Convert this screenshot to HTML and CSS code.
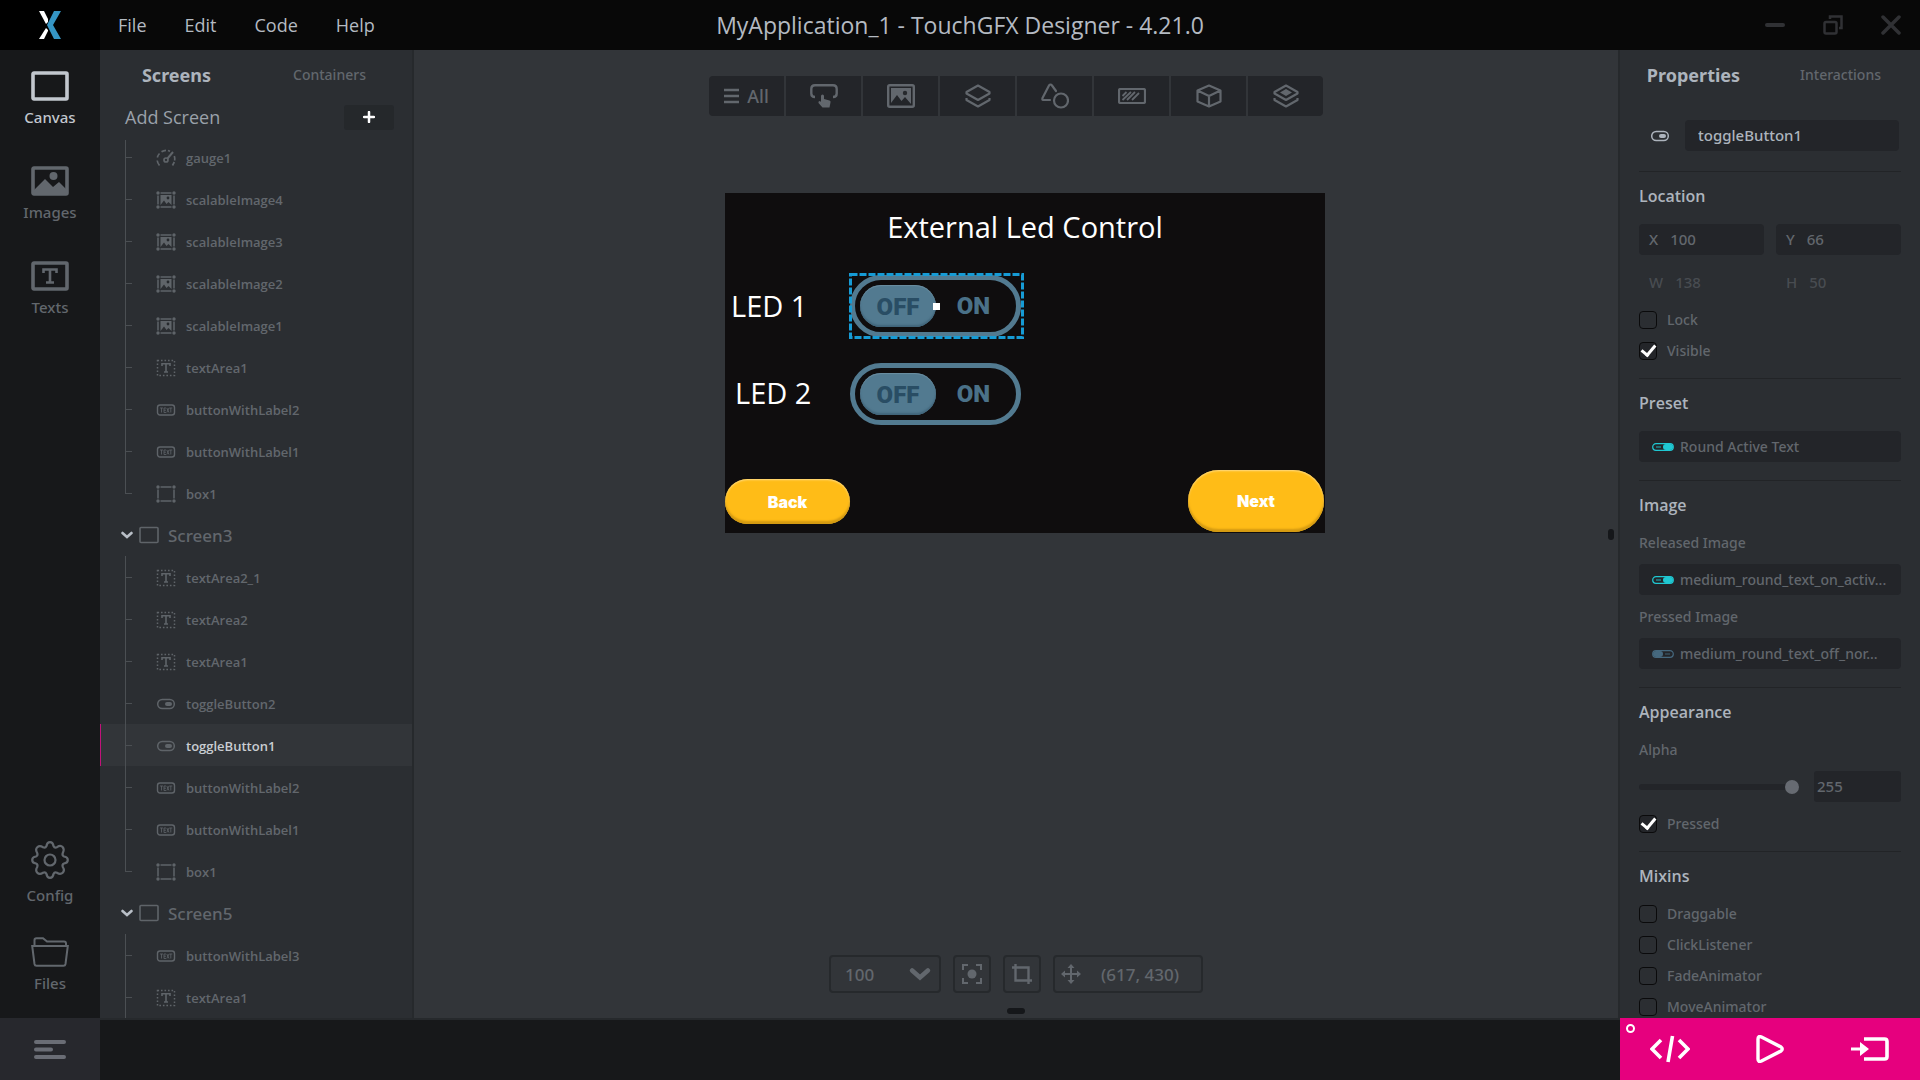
FILE: index.html
```html
<!DOCTYPE html>
<html lang="en">
<head>
    <meta charset="UTF-8">
    <meta name="viewport" content="width=device-width, initial-scale=1.0">
    <title>MyApplication_1 - TouchGFX Designer - 4.21.0</title>
    <link rel="stylesheet" href="styles.css">
</head>
<body>
    <!-- Icon sprite -->
    <svg class="sprite" aria-hidden="true">
        <symbol id="i-gauge" viewBox="0 0 20 18">
            <path d="M3.500 16.500Q1.500 14 1.200 11.500M1.300 8.500Q2 6 3.500 4.500M5.500 2.800Q7.500 1.400 10 1.300M12 1.500L14 2.300M18.300 7Q19 9 18.700 11.500M18.300 13L16.500 16.500" fill="none" stroke="currentColor" stroke-width="1.700"/>
            <path d="M17 3L11.500 9.500" stroke="currentColor" stroke-width="2"/>
            <circle cx="10" cy="11" r="2" fill="none" stroke="currentColor" stroke-width="1.700"/>
        </symbol>
        <symbol id="i-box" viewBox="0 0 20 18">
            <path d="M4.500 2H15.500M4.500 16H15.500M2 4.500V13.500M18 4.500V13.500" stroke="currentColor" stroke-width="1.500"/>
            <circle cx="2" cy="2" r="1.700"/><circle cx="18" cy="2" r="1.700"/><circle cx="2" cy="16" r="1.700"/><circle cx="18" cy="16" r="1.700"/>
        </symbol>
        <symbol id="i-scalable" viewBox="0 0 20 18">
            <use href="#i-box"/>
            <path d="M4.500 4H15.500V14L12.500 11L10.500 13L8 9.500L4.500 14Z"/>
            <circle cx="12" cy="7" r="1.400" class="cut"/>
        </symbol>
        <symbol id="i-textarea" viewBox="0 0 20 18">
            <rect x="1.500" y="1.500" width="17" height="15" fill="none" stroke="currentColor" stroke-width="1.500" stroke-dasharray="1.600 1.900"/>
            <path d="M6 7V4.800H14V7M10 5V13M8 13H12" fill="none" stroke="currentColor" stroke-width="1.600"/>
        </symbol>
        <symbol id="i-label" viewBox="0 0 20 18">
            <rect x="1.500" y="4" width="17" height="10" rx="2.500" fill="none" stroke="currentColor" stroke-width="1.400"/>
            <path d="M4 7H7M5.500 7V11.500M10 7H8V11.500H10M8 9.200H10M10.800 7L13 11.500M13 7L10.800 11.500M13.300 7H16.300M14.800 7V11.500" fill="none" stroke="currentColor" stroke-width=".8"/>
        </symbol>
        <symbol id="i-toggle" viewBox="0 0 20 18">
            <rect x="1.700" y="4.500" width="16.600" height="9" rx="4.500" fill="none" stroke="currentColor" stroke-width="1.500"/>
            <rect x="9" y="7" width="7" height="4" rx="2"/>
        </symbol>
        <symbol id="i-screen" viewBox="0 0 20 18">
            <rect x="1" y="1.500" width="18" height="15" rx="1" fill="none" stroke="currentColor" stroke-width="1.600"/>
        </symbol>
        <symbol id="i-chevron" viewBox="0 0 12 8">
            <path d="M1.500 2L6 6L10.500 2" fill="none" stroke="currentColor" stroke-width="2.600" stroke-linecap="round"/>
        </symbol>
        <symbol id="i-mini" viewBox="0 0 22 8">
            <rect x=".7" y=".7" width="20.600" height="6.600" rx="3.300" fill="none" stroke="currentColor" stroke-width="1.200"/>
            <path d="M4 4H9" stroke="currentColor" stroke-width="1.500" opacity=".6"/>
            <rect x="11" y="1" width="10" height="6" rx="3"/>
        </symbol>
    </svg>

    <div class="app">
        <header class="titlebar">
            <div class="logo">
                <svg width="22" height="28" viewBox="0 0 22 28">
                    <path d="M0 0H5L9 8V11L7 13Z" fill="#fff"/>
                    <path d="M0 28H5L9 20V19L7 17Z" fill="#fff"/>
                    <path d="M15 0H22L14 14L22 28H15L8 14Z" fill="#3595c4"/>
                </svg>
            </div>
            <nav class="menu">
                <button>File</button>
                <button>Edit</button>
                <button>Code</button>
                <button>Help</button>
            </nav>
            <h1 class="window-title">MyApplication_1 - TouchGFX Designer - 4.21.0</h1>
            <div class="window-buttons">
                <button aria-label="Minimize"><svg width="20" height="20" viewBox="0 0 20 20"><path d="M2 10H18" stroke="currentColor" stroke-width="4" stroke-linecap="round"/></svg></button>
                <button aria-label="Restore"><svg width="20" height="20" viewBox="0 0 20 20"><g fill="none" stroke="currentColor" stroke-width="2.500"><rect x="1.500" y="7" width="12" height="11.500" rx="1.500"/><path d="M7 4V1.500H18.500V13H16"/></g></svg></button>
                <button aria-label="Close"><svg width="20" height="20" viewBox="0 0 20 20"><path d="M2 2L18 18M18 2L2 18" stroke="currentColor" stroke-width="3.500" stroke-linecap="round"/></svg></button>
            </div>
        </header>

        <div class="workspace">
            <!-- Main navigation -->
            <nav class="rail">
                <button class="rail-item active">
                    <svg width="38" height="30" viewBox="0 0 38 30"><rect x="2" y="2" width="34" height="26" rx="1" fill="none" stroke="currentColor" stroke-width="3.600"/></svg>
                    Canvas
                </button>
                <button class="rail-item">
                    <svg width="38" height="30" viewBox="0 0 38 30"><rect x="2" y="2" width="34" height="26" rx="1" fill="none" stroke="currentColor" stroke-width="3.600"/><path d="M3 24L14 13L22 21L28 16L36 24V28H3Z"/><circle cx="22.500" cy="10" r="4"/></svg>
                    Images
                </button>
                <button class="rail-item">
                    <svg width="38" height="30" viewBox="0 0 38 30"><rect x="2" y="2" width="34" height="26" rx="1" fill="none" stroke="currentColor" stroke-width="3.600"/><path d="M12.500 12V8.500H25.500V12M19 8.500V21.500M15 21.500H23" fill="none" stroke="currentColor" stroke-width="2.600"/></svg>
                    Texts
                </button>
                <span class="rail-space"></span>
                <button class="rail-item config">
                    <svg width="38" height="38" viewBox="0 0 38 38"><g fill="none" stroke="currentColor" stroke-width="2.200" stroke-linejoin="round"><path d="M15.500 5Q16 1.200 19 1.200T22.500 5Q23.500 7.200 26 6.200Q29.500 3.800 31.600 6.100T31.800 12Q30.800 14.500 33 15.500Q36.800 16 36.800 19T33 22.500Q30.800 23.500 31.800 26Q34 29.500 31.700 31.700T26 31.800Q23.500 30.800 22.500 33Q22 36.800 19 36.800T15.500 33Q14.500 30.800 12 31.800Q8.500 34 6.300 31.700T6.200 26Q7.200 23.500 5 22.500Q1.200 22 1.200 19T5 15.500Q7.200 14.500 6.200 12Q4 8.500 6.300 6.300T12 6.200Q14.500 7.200 15.500 5Z"/><circle cx="19" cy="19" r="5.500"/></g></svg>
                    Config
                </button>
                <button class="rail-item files">
                    <svg width="38" height="30" viewBox="0 0 38 30"><path d="M3.500 9V3Q3.500 1.200 5.500 1.200H12L16 4.500H33Q35 4.500 35 6.500V9M1.200 9H36.800L34.500 27Q34.200 28.800 32.500 28.800H5.500Q3.800 28.800 3.500 27Z" fill="none" stroke="currentColor" stroke-width="2"/></svg>
                    Files
                </button>
            </nav>

            <!-- Screens tree -->
            <aside class="screens">
                <div class="tabs">
                    <button class="tab active">Screens</button>
                    <button class="tab">Containers</button>
                </div>
                <div class="add-screen">
                    <span>Add Screen</span>
                    <button class="add-btn" aria-label="Add Screen"><svg width="12" height="12" viewBox="0 0 12 12"><path d="M6 1V11M1 6H11" stroke="currentColor" stroke-width="2.500" stroke-linecap="round"/></svg></button>
                </div>
                <div class="tree">
                    <ul class="tree-items first">
                        <li><svg><use href="#i-gauge"/></svg>gauge1</li>
                        <li><svg><use href="#i-scalable"/></svg>scalableImage4</li>
                        <li><svg><use href="#i-scalable"/></svg>scalableImage3</li>
                        <li><svg><use href="#i-scalable"/></svg>scalableImage2</li>
                        <li><svg><use href="#i-scalable"/></svg>scalableImage1</li>
                        <li><svg><use href="#i-textarea"/></svg>textArea1</li>
                        <li><svg><use href="#i-label"/></svg>buttonWithLabel2</li>
                        <li><svg><use href="#i-label"/></svg>buttonWithLabel1</li>
                        <li class="last"><svg><use href="#i-box"/></svg>box1</li>
                    </ul>
                    <div class="tree-screen"><svg class="chevron"><use href="#i-chevron"/></svg><svg><use href="#i-screen"/></svg>Screen3</div>
                    <ul class="tree-items">
                        <li><svg><use href="#i-textarea"/></svg>textArea2_1</li>
                        <li><svg><use href="#i-textarea"/></svg>textArea2</li>
                        <li><svg><use href="#i-textarea"/></svg>textArea1</li>
                        <li><svg><use href="#i-toggle"/></svg>toggleButton2</li>
                        <li class="selected"><svg><use href="#i-toggle"/></svg>toggleButton1</li>
                        <li><svg><use href="#i-label"/></svg>buttonWithLabel2</li>
                        <li><svg><use href="#i-label"/></svg>buttonWithLabel1</li>
                        <li class="last"><svg><use href="#i-box"/></svg>box1</li>
                    </ul>
                    <div class="tree-screen"><svg class="chevron"><use href="#i-chevron"/></svg><svg><use href="#i-screen"/></svg>Screen5</div>
                    <ul class="tree-items">
                        <li><svg><use href="#i-label"/></svg>buttonWithLabel3</li>
                        <li><svg><use href="#i-textarea"/></svg>textArea1</li>
                    </ul>
                </div>
            </aside>

            <!-- Canvas -->
            <main class="canvas">
                <div class="widget-bar">
                    <button><svg width="15" height="16" viewBox="0 0 15 16"><path d="M0 2H15M0 8H15M0 14H15" stroke="currentColor" stroke-width="2.400"/></svg>All</button>
                    <button aria-label="Buttons"><svg width="28" height="24" viewBox="0 0 28 24"><path d="M5 13Q1.300 13 1.300 9.500V5Q1.300 1.300 5 1.300H23Q26.700 1.300 26.700 5V9.500Q26.700 13 23 13" fill="none" stroke="currentColor" stroke-width="2.400"/><path d="M11 12Q11 10.500 12.500 10.500T14 12V15L19.500 16.500Q21 17 20.500 18.500L19.500 23.500H12.500L8.500 19Q8 17.300 9.500 17L11 17.800Z"/></svg></button>
                    <button aria-label="Images"><svg width="28" height="24" viewBox="0 0 28 24"><rect x="1.200" y="1.200" width="25.600" height="21.600" rx="1.500" fill="none" stroke="currentColor" stroke-width="2.400"/><path d="M4 4H24V20L18 13L14.500 17L10 11L4 19Z"/><circle cx="18" cy="9" r="2.200" class="cut"/></svg></button>
                    <button aria-label="Containers"><svg width="26" height="24" viewBox="0 0 26 24"><g fill="none" stroke="currentColor" stroke-width="2.200" stroke-linejoin="round"><path d="M13 1.500L24.500 8V9.500L13 16L1.500 9.500V8Z"/><path d="M1.500 14V16L13 22.500L24.500 16V14"/></g></svg></button>
                    <button aria-label="Shapes"><svg width="28" height="26" viewBox="0 0 28 26"><g fill="none" stroke="currentColor" stroke-width="2.200" stroke-linejoin="round" stroke-linecap="round"><path d="M9 17H2Q1 17 1.500 15L8 2.500Q9.500 .5 11 2.500L15 8"/><circle cx="20" cy="17.500" r="7"/></g></svg></button>
                    <button aria-label="Progress"><svg width="28" height="16" viewBox="0 0 28 16"><rect x="1" y="1" width="26" height="14" rx="1.500" fill="none" stroke="currentColor" stroke-width="2.200"/><path d="M4.500 8L8.500 4M4.500 12L13 4M9 12L17 4M14 12L21 5" stroke="currentColor" stroke-width="1.800"/></svg></button>
                    <button aria-label="Miscellaneous"><svg width="26" height="24" viewBox="0 0 26 24"><path d="M13 1.500L24.500 6.500V17.500L13 22.500L1.500 17.500V6.500ZM1.500 6.500L13 12L24.500 6.500M13 12V22" fill="none" stroke="currentColor" stroke-width="2.200" stroke-linejoin="round"/></svg></button>
                    <button aria-label="Custom containers"><svg width="26" height="24" viewBox="0 0 26 24"><g fill="none" stroke="currentColor" stroke-width="2.200" stroke-linejoin="round"><path d="M13 1.500L24.500 8V9.500L13 16L1.500 9.500V8Z"/><path d="M1.500 14V16L13 22.500L24.500 16V14"/></g><path d="M13 5L19 8.500L13 12L7 8.500Z"/></svg></button>
                </div>

                <div class="stage">
                    <div class="device">
                        <p class="device-title">External Led Control</p>
                        <p class="led led-1">LED 1</p>
                        <p class="led led-2">LED 2</p>
                        <button class="toggle toggle-1"><span class="knob">OFF</span><span class="state">ON</span></button>
                        <button class="toggle toggle-2"><span class="knob">OFF</span><span class="state">ON</span></button>
                        <svg class="selection" width="176" height="66" viewBox="0 0 176 66">
                            <rect x="1.500" y="1.500" width="172" height="63" fill="none" stroke="#169bd5" stroke-width="3" stroke-dasharray="7 2"/>
                            <rect x="84" y="30" width="7" height="7" fill="#fff"/>
                        </svg>
                        <button class="flow-btn back">Back</button>
                        <button class="flow-btn next">Next</button>
                    </div>
                </div>

                <div class="view-bar">
                    <div class="zoom-field">
                        <select aria-label="Zoom"><option>100</option></select>
                        <svg width="22" height="14"><use href="#i-chevron"/></svg>
                    </div>
                    <button aria-label="Center"><svg width="20" height="20" viewBox="0 0 20 20"><path d="M1 6V1H6M14 1H19V6M19 14V19H14M6 19H1V14" fill="none" stroke="currentColor" stroke-width="2"/><circle cx="10" cy="10" r="4.500"/></svg></button>
                    <button aria-label="Crop"><svg width="20" height="20" viewBox="0 0 20 20"><path d="M0 3.500H16.500V20M3.500 0V16.500H20" fill="none" stroke="currentColor" stroke-width="2.400"/></svg></button>
                    <div class="coords"><svg width="20" height="20" viewBox="0 0 20 20"><path d="M10 3V17M3 10H17" stroke="currentColor" stroke-width="2"/><path d="M10 0L13.500 4H6.500ZM10 20L6.500 16H13.500ZM0 10L4 6.500V13.500ZM20 10L16 13.500V6.500Z"/></svg>(617, 430)</div>
                </div>
                <span class="grip grip-bottom"></span>
                <span class="grip grip-right"></span>
            </main>

            <!-- Properties -->
            <aside class="properties">
                <div class="tabs">
                    <button class="tab active">Properties</button>
                    <button class="tab">Interactions</button>
                </div>
                <div class="props-body">
                    <div class="name-row">
                        <svg width="20" height="18"><use href="#i-toggle"/></svg>
                        <input type="text" class="name-input" aria-label="Name" value="toggleButton1">
                    </div>

                    <section>
                        <h2>Location</h2>
                        <div class="field-grid">
                            <label class="field">X <input type="text" value="100"></label>
                            <label class="field">Y <input type="text" value="66"></label>
                            <label class="field disabled">W <input type="text" value="138" disabled></label>
                            <label class="field disabled">H <input type="text" value="50" disabled></label>
                        </div>
                        <div class="checks">
                            <label class="check"><input type="checkbox">Lock</label>
                            <label class="check"><input type="checkbox" checked>Visible</label>
                        </div>
                    </section>

                    <section>
                        <h2>Preset</h2>
                        <button class="picker"><svg class="on"><use href="#i-mini"/></svg>Round Active Text</button>
                    </section>

                    <section>
                        <h2>Image</h2>
                        <p class="caption">Released Image</p>
                        <button class="picker"><svg class="on"><use href="#i-mini"/></svg>medium_round_text_on_activ...</button>
                        <p class="caption">Pressed Image</p>
                        <button class="picker"><svg class="off"><use href="#i-mini"/></svg>medium_round_text_off_nor...</button>
                    </section>

                    <section>
                        <h2>Appearance</h2>
                        <label class="caption" for="alpha">Alpha</label>
                        <div class="slider-row">
                            <input type="range" id="alpha" min="0" max="255" value="255">
                            <input type="text" class="alpha-input" aria-label="Alpha value" value="255">
                        </div>
                        <div class="checks">
                            <label class="check"><input type="checkbox" checked>Pressed</label>
                        </div>
                    </section>

                    <section>
                        <h2>Mixins</h2>
                        <div class="checks">
                            <label class="check"><input type="checkbox">Draggable</label>
                            <label class="check"><input type="checkbox">ClickListener</label>
                            <label class="check"><input type="checkbox">FadeAnimator</label>
                            <label class="check"><input type="checkbox">MoveAnimator</label>
                        </div>
                    </section>
                </div>
            </aside>
        </div>

        <footer class="bottombar">
            <button class="log-btn" aria-label="Log"><svg width="32" height="20" viewBox="0 0 32 20"><path d="M2 2H30M2 9.500H17M2 17H30" stroke="currentColor" stroke-width="4" stroke-linecap="round"/></svg></button>
            <div class="status"></div>
            <div class="actions">
                <span class="badge"></span>
                <button aria-label="Generate code"><svg width="40" height="28" viewBox="0 0 40 28"><path d="M11 5L2 14L11 23M29 5L38 14L29 23M22.500 1L18 27" fill="none" stroke="currentColor" stroke-width="3.600"/></svg></button>
                <button aria-label="Run simulator"><svg width="28" height="28" viewBox="0 0 28 28"><path d="M2 4Q2 .5 5.500 2L25 12Q27.500 14 25 16L5.500 26Q2 27.500 2 24Z" fill="none" stroke="currentColor" stroke-width="3.400"/></svg></button>
                <button aria-label="Run target"><svg width="38" height="24" viewBox="0 0 38 24"><path d="M13 2H33.500Q36 2 36 4.500V19.500Q36 22 33.500 22H13" fill="none" stroke="currentColor" stroke-width="3.600"/><path d="M0 10.500H9V5L18 12L9 19V13.500H0Z"/></svg></button>
            </div>
        </footer>
    </div>
</body>
</html>
```
FILE: styles.css
```css
* {
    margin: 0;
    padding: 0;
    box-sizing: border-box;
}

body {
    font-family: "Noto Sans", "Open Sans", sans-serif;
    font-size: 14px;
    font-weight: 500;
    color: #62676d;
    background: #17181a;
}

button, input, select {
    font: inherit;
    color: inherit;
    background: none;
    border: none;
    outline: none;
}

button {
    display: flex;
    align-items: center;
    justify-content: center;
    cursor: pointer;
}

svg {
    display: block;
    fill: currentColor;
    flex: none;
}

ul {
    list-style: none;
}

.sprite {
    position: absolute;
    width: 0;
    height: 0;
}

.cut {
    fill: #26292d;
}

.app {
    display: flex;
    flex-direction: column;
    height: 100vh;
    overflow: hidden;
}

/* Title bar */
.titlebar {
    display: grid;
    grid-template-columns: 100px 1fr auto 1fr 100px;
    align-items: center;
    height: 50px;
    background: #080808;
    color: #b4bac2;
    font-family: "Open Sans", sans-serif;
}

.logo {
    display: flex;
    align-items: center;
    justify-content: center;
    height: 50px;
    background: #000;
}

.menu {
    display: flex;
    gap: 38px;
    padding-left: 18px;
    font-size: 18px;
}

.window-title {
    font-size: 23px;
    font-weight: 500;
}

.window-buttons {
    display: flex;
    justify-content: flex-end;
    grid-column: 4 / 6;
    gap: 38px;
    padding-right: 19px;
    color: #303134;
}

/* Layout */
.workspace {
    display: flex;
    flex: 1;
    min-height: 0;
}

/* Left rail */
.rail {
    display: flex;
    flex-direction: column;
    width: 100px;
    padding: 21px 0 20px;
}

.rail-item {
    flex-direction: column;
    gap: 5px;
    height: 95px;
    justify-content: flex-start;
    font-size: 15px;
    line-height: 22px;
}

.rail-item.active {
    color: #c2c7ce;
}

.rail-space {
    flex: 1;
}

.rail-item.config {
    height: 96px;
}

.rail-item.files {
    height: 61px;
}

/* Panels */
.screens {
    display: flex;
    flex-direction: column;
    width: 314px;
    background: #2b2e32;
    border-right: 2px solid #26292c;
}

.tabs {
    display: flex;
    align-items: center;
    height: 50px;
    padding: 0 6px 1px 0;
}

.tab {
    flex: 1;
    font-size: 14px;
}

.tab.active {
    font-size: 18px;
    font-weight: 700;
    color: #adb4bd;
}

.add-screen {
    display: flex;
    align-items: center;
    justify-content: space-between;
    height: 40px;
    padding: 0 18px 6px 25px;
    font-family: "Open Sans", sans-serif;
    font-size: 18px;
    color: #9aa1aa;
}

.add-btn {
    width: 50px;
    height: 25px;
    border-radius: 3px;
    background: #25282b;
    color: #fff;
}

/* Tree */
.tree {
    flex: 1;
    min-height: 0;
    overflow: hidden;
}

.tree-items.first {
    margin-top: -4px;
}

.tree-items li {
    position: relative;
    display: flex;
    align-items: center;
    gap: 10px;
    height: 42px;
    padding: 2px 0 0 56px;
    font-family: "Open Sans", sans-serif;
    font-size: 13px;
    font-weight: 600;
}

.tree-items li::before {
    content: "";
    position: absolute;
    left: 25px;
    top: 0;
    width: 1px;
    height: 42px;
    background: #4b4f53;
}

.tree-items li::after {
    content: "";
    position: absolute;
    left: 25px;
    top: 21px;
    width: 7px;
    height: 1px;
    background: #4b4f53;
}

.tree-items li.last::before {
    height: 21px;
}

.tree-items li.selected {
    background: #323539;
    color: #c9cdd2;
    box-shadow: inset 1px 0 #c2127a;
}

.tree-items svg, .tree-screen svg {
    width: 20px;
    height: 18px;
    color: #5f6469;
}

.tree-screen {
    display: flex;
    align-items: center;
    height: 42px;
    padding-left: 21px;
    font-size: 17px;
}

.tree-screen svg {
    margin: 0 9px 0 6px;
}

.tree-screen .chevron {
    width: 12px;
    height: 8px;
    margin: 0;
    color: #b9bfc7;
}

/* Canvas */
.canvas {
    position: relative;
    display: flex;
    flex-direction: column;
    align-items: center;
    flex: 1;
    padding: 26px 0 25px;
    background: #323539;
}

.widget-bar {
    display: flex;
    gap: 2px;
    border-radius: 4px;
    overflow: hidden;
}

.widget-bar button {
    width: 75px;
    height: 40px;
    gap: 8px;
    background: #232529;
    font-size: 18px;
}

.stage {
    flex: 1;
    padding: 77px 0 0 18px;
}

/* Simulated display, widgets sit at their designed coordinates */
.device {
    position: relative;
    width: 600px;
    height: 340px;
    background: #0f0d0e;
    color: #fff;
    font-family: "Open Sans", sans-serif;
    font-size: 29px;
    font-weight: 400;
    line-height: 36px;
}

.device-title {
    padding-top: 16px;
    text-align: center;
}

.led {
    position: absolute;
}

.led-1 {
    left: 6px;
    top: 95px;
}

.led-2 {
    left: 10px;
    top: 182px;
}

.toggle {
    position: absolute;
    left: 125px;
    justify-content: flex-start;
    width: 171px;
    height: 62px;
    padding-left: 5px;
    border: 5px solid #527a90;
    border-radius: 31px;
    font: 900 24px Roboto, sans-serif;
    color: #4a7188;
}

.toggle-1 {
    top: 82px;
}

.toggle-2 {
    top: 170px;
}

.knob {
    width: 76px;
    height: 42px;
    border-radius: 21px;
    background: #527a90;
    box-shadow: inset 0 -2px 2px #41657a, inset 0 1px 1px #6b8ea1;
    color: #294d64;
    line-height: 44px;
}

.state {
    flex: 1;
    padding-right: 5px;
    line-height: 44px;
}

.selection {
    position: absolute;
    left: 124px;
    top: 80px;
}

.flow-btn {
    position: absolute;
    background: #ffbc17;
    box-shadow: inset 0 -3px 2px #d49a12, inset 0 1px 2px #ffdc85;
    font: 900 16px Inter, sans-serif;
    color: #fff;
}

.back {
    left: 0;
    bottom: 9px;
    width: 125px;
    height: 45px;
    border-radius: 23px;
}

.next {
    right: 1px;
    bottom: 1px;
    width: 136px;
    height: 62px;
    border-radius: 31px;
}

/* View controls */
.view-bar {
    display: flex;
    gap: 12px;
    font-size: 17px;
}

.view-bar button, .zoom-field, .coords {
    display: flex;
    align-items: center;
    height: 38px;
    border: 2px solid #26292c;
    border-radius: 4px;
}

.view-bar button {
    width: 38px;
}

.zoom-field {
    position: relative;
    width: 112px;
}

.zoom-field select {
    width: 100%;
    height: 100%;
    padding-left: 14px;
    appearance: none;
}

.zoom-field svg {
    position: absolute;
    right: 8px;
    pointer-events: none;
}

.coords {
    gap: 20px;
    width: 150px;
    padding-left: 6px;
}

.grip {
    position: absolute;
    border-radius: 3px;
    background: #15171a;
}

.grip-bottom {
    left: 50%;
    bottom: 4px;
    width: 18px;
    height: 6px;
    margin-left: -9px;
}

.grip-right {
    right: 4px;
    top: 50%;
    width: 6px;
    height: 11px;
    margin-top: -5px;
}

/* Properties panel */
.properties {
    display: flex;
    flex-direction: column;
    width: 302px;
    background: #2b2e32;
    border-left: 2px solid #26292c;
}

.props-body {
    flex: 1;
    min-height: 0;
    padding: 20px 19px 0;
    overflow: hidden;
}

.name-row {
    display: flex;
    align-items: center;
    gap: 15px;
    height: 31px;
    margin-bottom: 20px;
    padding: 0 2px 0 11px;
    color: #adb4bd;
}

.name-input {
    flex: 1;
    min-width: 0;
    height: 31px;
    padding: 0 0 1px 13px;
    border-radius: 4px;
    background: #232529;
    font-size: 15px;
}

.properties section {
    padding-bottom: 18px;
    border-top: 1px solid #222427;
}

.properties h2 {
    padding: 12px 0 16px;
    font-family: "Open Sans", sans-serif;
    font-size: 16px;
    font-weight: 600;
    line-height: 24px;
    color: #adb4bd;
}

.field-grid {
    display: grid;
    grid-template-columns: 1fr 1fr;
    gap: 12px;
    margin-bottom: 12px;
}

.field {
    display: flex;
    align-items: center;
    gap: 12px;
    height: 31px;
    padding: 0 0 1px 10px;
    border-radius: 4px;
    background: #232529;
    font-size: 15px;
}

.field input {
    flex: 1;
    width: 0;
}

.field.disabled {
    background: none;
    color: #484c51;
}

.checks {
    display: flex;
    flex-direction: column;
    gap: 12px;
}

.check {
    display: flex;
    align-items: center;
    gap: 10px;
    height: 19px;
}

.check input {
    appearance: none;
    display: flex;
    align-items: center;
    justify-content: center;
    width: 18px;
    height: 18px;
    border: 1px solid #0a0a0b;
    border-radius: 4px;
}

.check input:checked {
    background: #232529;
}

.check input:checked::before {
    content: "";
    width: 6px;
    height: 11px;
    margin-top: -3px;
    border: solid #fff;
    border-width: 0 3px 3px 0;
    transform: rotate(40deg);
}

.picker {
    justify-content: flex-start;
    gap: 6px;
    width: 100%;
    height: 31px;
    padding-left: 13px;
    border-radius: 4px;
    background: #232529;
    white-space: nowrap;
}

.picker svg {
    width: 22px;
    height: 8px;
}

.picker .on {
    color: #1fc8d2;
}

.picker .off {
    color: #45687e;
    transform: scaleX(-1);
}

.picker + .caption {
    margin-top: 12px;
}

.caption {
    display: block;
    margin-bottom: 11px;
    line-height: 20px;
}

.slider-row {
    display: flex;
    align-items: center;
    justify-content: space-between;
    margin-bottom: 12px;
}

.slider-row input[type="range"] {
    appearance: none;
    width: 160px;
    height: 14px;
}

.slider-row input[type="range"]::-webkit-slider-runnable-track {
    height: 6px;
    border-radius: 3px;
    background: #232529;
}

.slider-row input[type="range"]::-webkit-slider-thumb {
    appearance: none;
    width: 14px;
    height: 14px;
    margin-top: -4px;
    border-radius: 50%;
    background: #676b72;
}

.alpha-input {
    width: 87px;
    height: 31px;
    padding: 0 0 1px 3px;
    border-radius: 3px;
    background: #232529;
    font-size: 15px;
}

/* Bottom bar */
.bottombar {
    display: flex;
    height: 62px;
}

.log-btn {
    width: 100px;
    padding-top: 1px;
    background: #27282d;
    color: #6a6d75;
}

.status {
    flex: 1;
    border-top: 2px solid #26292c;
}

.actions {
    position: relative;
    display: flex;
    width: 300px;
    background: #e6007e;
    color: #fff;
}

.actions button {
    flex: 1;
}

.badge {
    position: absolute;
    left: 6px;
    top: 6px;
    width: 9px;
    height: 9px;
    border: 2px solid #fff;
    border-radius: 50%;
}
```
